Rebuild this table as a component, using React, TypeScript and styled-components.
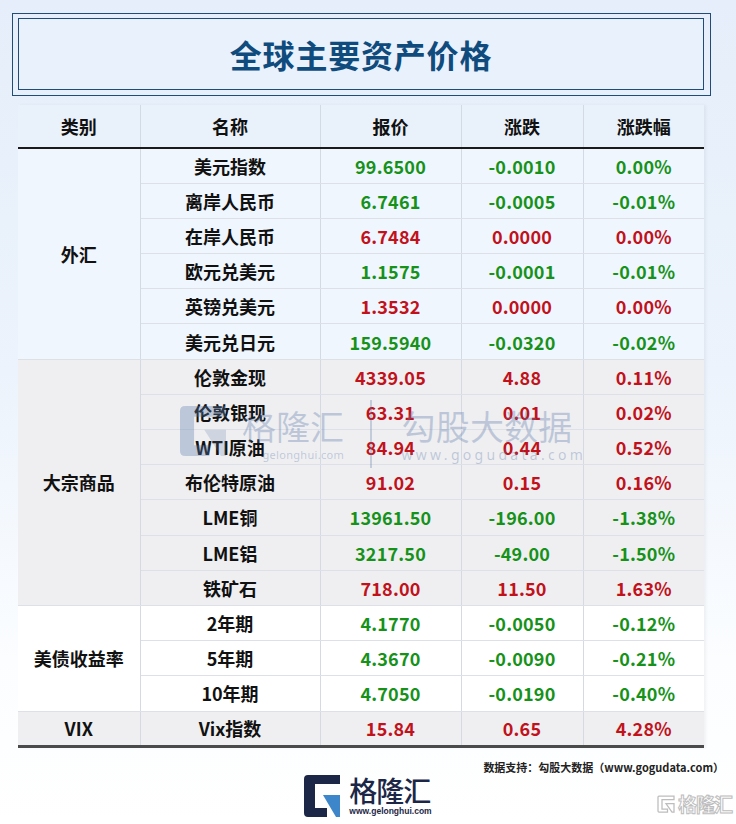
import React from "react";
import styled, { createGlobalStyle } from "styled-components";

const GlobalStyle = createGlobalStyle`
  html, body {
    margin: 0;
    padding: 0;
  }
  body {
    font-family: "Noto Sans CJK SC", "Noto Sans", sans-serif;
  }
`;

const GREEN = "#16921a";
const RED = "#c1121c";

type Row = { name: string; price: string; chg: string; pct: string; up?: boolean };
type Group = { cat: string; bg: string; rows: Row[] };

const groups: Group[] = [
  {
    cat: "外汇",
    bg: "#f0f6fe",
    rows: [
      { name: "美元指数", price: "99.6500", chg: "-0.0010", pct: "0.00%" },
      { name: "离岸人民币", price: "6.7461", chg: "-0.0005", pct: "-0.01%" },
      { name: "在岸人民币", price: "6.7484", chg: "0.0000", pct: "0.00%", up: true },
      { name: "欧元兑美元", price: "1.1575", chg: "-0.0001", pct: "-0.01%" },
      { name: "英镑兑美元", price: "1.3532", chg: "0.0000", pct: "0.00%", up: true },
      { name: "美元兑日元", price: "159.5940", chg: "-0.0320", pct: "-0.02%" },
    ],
  },
  {
    cat: "大宗商品",
    bg: "#efeff1",
    rows: [
      { name: "伦敦金现", price: "4339.05", chg: "4.88", pct: "0.11%", up: true },
      { name: "伦敦银现", price: "63.31", chg: "0.01", pct: "0.02%", up: true },
      { name: "WTI原油", price: "84.94", chg: "0.44", pct: "0.52%", up: true },
      { name: "布伦特原油", price: "91.02", chg: "0.15", pct: "0.16%", up: true },
      { name: "LME铜", price: "13961.50", chg: "-196.00", pct: "-1.38%" },
      { name: "LME铝", price: "3217.50", chg: "-49.00", pct: "-1.50%" },
      { name: "铁矿石", price: "718.00", chg: "11.50", pct: "1.63%", up: true },
    ],
  },
  {
    cat: "美债收益率",
    bg: "#ffffff",
    rows: [
      { name: "2年期", price: "4.1770", chg: "-0.0050", pct: "-0.12%" },
      { name: "5年期", price: "4.3670", chg: "-0.0090", pct: "-0.21%" },
      { name: "10年期", price: "4.7050", chg: "-0.0190", pct: "-0.40%" },
    ],
  },
  {
    cat: "VIX",
    bg: "#efeff1",
    rows: [{ name: "Vix指数", price: "15.84", chg: "0.65", pct: "4.28%", up: true }],
  },
];

const Page = styled.div`
  position: relative;
  width: 736px;
  height: 824px;
  overflow: hidden;
  background: linear-gradient(180deg, #e5eefa 0%, #ecf3fc 45%, #fbfdff 80%, #ffffff 100%);
`;

const TitleOuter = styled.div`
  margin: 13px 25px 0 12px;
  padding: 4px 6px 5px 5px;
  border: 1px solid #1f4d78;
`;

const TitleInner = styled.div`
  height: 70px;
  border: 1.5px solid #1f4d78;
  background: #e8f1fc;
  display: flex;
  align-items: center;
  justify-content: center;
`;

const Title = styled.h1`
  margin: 0;
  font-size: 32px;
  font-weight: 700;
  color: #0f4b7c;
  letter-spacing: 0.8px;
`;

const TableWrap = styled.div`
  position: relative;
  margin: 9px 0 0 18px;
  width: 686px;
`;

const Table = styled.table`
  width: 686px;
  border-collapse: collapse;
  table-layout: fixed;
  box-shadow: 2px 0 3px rgba(0, 0, 0, 0.05);
`;

const Th = styled.th`
  height: 42px;
  padding: 0;
  background: #e9f1fb;
  border-right: 1px solid #d3dae3;
  border-bottom: 2px solid #1a1a1a;
  font-size: 18px;
  font-weight: 700;
  color: #111;
  text-align: center;
  &:last-child {
    border-right: none;
  }
`;

const Tr = styled.tr<{ $bg: string; $last?: boolean }>`
  height: 35.2px;
  background: ${(p) => p.$bg};
  td {
    border-bottom: ${(p) => (p.$last ? "3px solid #4a4a4a" : "1px solid #dde1e7")};
  }
`;

const Td = styled.td<{ $color?: string }>`
  padding: 0;
  text-align: center;
  vertical-align: middle;
  font-size: 18px;
  font-weight: 700;
  letter-spacing: ${(p) => (p.$color ? "0.2px" : "0")};
  color: ${(p) => p.$color || "#111"};
  border-right: 1px solid #d3dae3;
  line-height: 1;
  &:last-child {
    border-right: none;
  }
`;

const Watermark = styled.div`
  position: absolute;
  left: 162px;
  top: 301px;
  display: flex;
  align-items: flex-start;
  pointer-events: none;
  color: rgba(92, 122, 170, 0.34);
  white-space: nowrap;
`;

const WmBrand = styled.div`
  display: flex;
  flex-direction: column;
  align-items: flex-end;
  margin-left: 16px;
`;

const WmBig = styled.div<{ $spacing?: number }>`
  font-size: 34px;
  font-weight: 400;
  line-height: 40px;
  letter-spacing: ${(p) => p.$spacing ?? 0}px;
`;

const WmSmall = styled.div<{ $spacing: number; $size: number }>`
  font-family: "Noto Sans", sans-serif;
  font-size: ${(p) => p.$size}px;
  letter-spacing: ${(p) => p.$spacing}px;
  line-height: 14px;
  margin-top: 2px;
`;

const WmSep = styled.div`
  width: 1.5px;
  height: 68px;
  margin: -6px 30px 0 26px;
  background: rgba(92, 122, 170, 0.3);
`;

const WmRight = styled.div`
  display: flex;
  flex-direction: column;
`;

const Source = styled.div`
  margin: 11px 12px 0 0;
  text-align: right;
  font-size: 11px;
  font-weight: 700;
  color: #222;
`;

const Footer = styled.div`
  display: flex;
  justify-content: center;
  align-items: flex-start;
  gap: 9px;
  margin-top: 0;
`;

const LogoText = styled.div`
  display: flex;
  flex-direction: column;
  align-items: flex-start;
  white-space: nowrap;
`;

const LogoName = styled.div`
  font-size: 28px;
  font-weight: 500;
  line-height: 31px;
  color: #1c2747;
  letter-spacing: -1px;
`;

const LogoUrl = styled.div`
  font-family: "Liberation Sans", Arial, sans-serif;
  font-size: 8.5px;
  font-weight: 700;
  color: #1c2747;
`;

const Corner = styled.div`
  position: absolute;
  right: 4px;
  bottom: 7px;
  display: flex;
  align-items: center;
  gap: 3px;
  white-space: nowrap;
`;

const CornerText = styled.div`
  font-size: 19px;
  font-weight: 700;
  color: #ffffff;
  -webkit-text-stroke: 1px #bdbdbd;
  letter-spacing: -1px;
`;

const GLogo = ({ w, h, dark, blue }: { w: number; h: number; dark: string; blue: string }) => (
  <svg width={w} height={h} viewBox="0 0 36 42" preserveAspectRatio="none">
    <path d="M4 0 H36 V9 H11 V33 H23 V42 H4 Q0 42 0 38 V4 Q0 0 4 0 Z" fill={dark} />
    <path d="M19 20 H36 V42 H32 Z" fill={blue} />
  </svg>
);

const CornerLogo = () => (
  <svg width="18" height="18" viewBox="0 0 36 36">
    <path
      d="M4 2 H34 V9 H10 V28 H21 V34 H4 Q2 34 2 32 V4 Q2 2 4 2 Z"
      fill="#fff"
      stroke="#bdbdbd"
      strokeWidth="2.5"
    />
    <path d="M18 17 H34 V34 H30 Z" fill="#fff" stroke="#bdbdbd" strokeWidth="2.5" />
  </svg>
);

const cols = [122, 180, 141, 122, 121];
const heads = ["类别", "名称", "报价", "涨跌", "涨跌幅"];

export default function App() {
  return (
    <Page>
      <GlobalStyle />
      <TitleOuter>
        <TitleInner>
          <Title>全球主要资产价格</Title>
        </TitleInner>
      </TitleOuter>

      <TableWrap>
        <Table>
          <colgroup>
            {cols.map((w, i) => (
              <col key={i} style={{ width: w }} />
            ))}
          </colgroup>
          <thead>
            <tr>
              {heads.map((h) => (
                <Th key={h}>{h}</Th>
              ))}
            </tr>
          </thead>
          <tbody>
            {groups.map((g, gi) =>
              g.rows.map((r, ri) => {
                const color = r.up ? RED : GREEN;
                const last = gi === groups.length - 1 && ri === g.rows.length - 1;
                return (
                  <Tr key={r.name} $bg={g.bg} $last={last}>
                    {ri === 0 && <Td rowSpan={g.rows.length}>{g.cat}</Td>}
                    <Td>{r.name}</Td>
                    <Td $color={color}>{r.price}</Td>
                    <Td $color={color}>{r.chg}</Td>
                    <Td $color={color}>{r.pct}</Td>
                  </Tr>
                );
              })
            )}
          </tbody>
        </Table>

        <Watermark>
          <GLogo w={46} h={50} dark="rgba(92,122,170,0.34)" blue="rgba(92,122,170,0.22)" />
          <WmBrand>
            <WmBig>格隆汇</WmBig>
            <WmSmall $size={11} $spacing={0.3}>gelonghui.com</WmSmall>
          </WmBrand>
          <WmSep />
          <WmRight>
            <WmBig $spacing={0.2}>勾股大数据</WmBig>
            <WmSmall $size={14} $spacing={3.3}>www.gogudata.com</WmSmall>
          </WmRight>
        </Watermark>
      </TableWrap>

      <Source>数据支持：勾股大数据（www.gogudata.com）</Source>

      <Footer>
        <GLogo w={36} h={42} dark="#1c2747" blue="#3d86c9" />
        <LogoText>
          <LogoName>格隆汇</LogoName>
          <LogoUrl>www.gelonghui.com</LogoUrl>
        </LogoText>
      </Footer>

      <Corner>
        <CornerLogo />
        <CornerText>格隆汇</CornerText>
      </Corner>
    </Page>
  );
}
